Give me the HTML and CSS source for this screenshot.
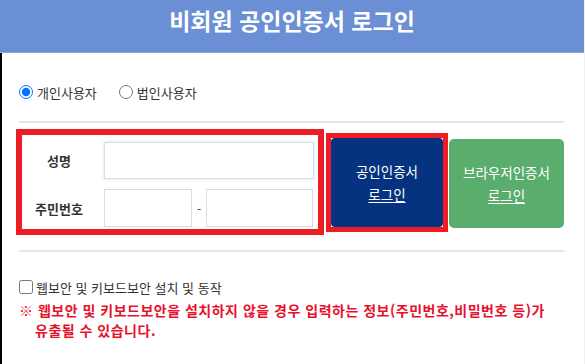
FILE: index.html
```html
<!DOCTYPE html>
<html lang="ko">
<head>
    <meta charset="UTF-8">
    <meta name="viewport" content="width=device-width, initial-scale=1.0">
    <title>비회원 공인인증서 로그인</title>
    <link rel="stylesheet" href="styles.css">
</head>
<body>
    <div class="top">
        <h1>비회원 공인인증서 로그인</h1>
    </div>
    <div class="wrap">
        <div class="types">
            <label class="type"><input type="radio" name="userType" checked> 개인사용자</label>
            <label class="type"><input type="radio" name="userType"> 법인사용자</label>
        </div>
        <hr class="line">
        <div class="login-row">
            <div class="fields">
                <div class="field">
                    <span class="field-name">성명</span>
                    <input type="text" class="inp inp-name">
                </div>
                <div class="field">
                    <span class="field-name">주민번호</span>
                    <input type="text" class="inp inp-jumin1">
                    <span class="dash">-</span>
                    <input type="password" class="inp inp-jumin2">
                </div>
            </div>
            <div class="cert-box">
                <button class="btn btn-cert"><span>공인인증서</span><u>로그인</u></button>
            </div>
            <button class="btn btn-browser"><span>브라우저인증서</span><u>로그인</u></button>
        </div>
        <hr class="line line-bottom">
        <div class="opts">
            <label class="security"><input type="checkbox"> 웹보안 및 키보드보안 설치 및 동작</label>
            <p class="warn">※ 웹보안 및 키보드보안을 설치하지 않을 경우 입력하는 정보(주민번호,비밀번호 등)가 유출될 수 있습니다.</p>
        </div>
    </div>
</body>
</html>
```

FILE: styles.css
```css
html, body{
    margin: 0;
    padding: 0;
    height: 100%;
}
body{
    background: #fff;
    font-family: "Noto Sans CJK KR", "Malgun Gothic", sans-serif;
    font-size: 13px;
    color: #333;
    display: flex;
    flex-direction: column;
    border-right: 1px solid #f0f0f0;
    box-sizing: border-box;
}
.top{
    height: 52px;
    background: #6a8fd4;
    border-bottom: 1px solid #8aa8e0;
}
.top h1{
    margin: 0;
    text-align: center;
    color: #fff;
    font-size: 23px;
    font-weight: bold;
    line-height: 40px;
}
.wrap{
    flex: 1;
    border-left: 2px solid #000;
    padding: 0 20px 0 17px;
}
.types{
    display: flex;
    gap: 22px;
    margin-top: 29px;
    height: 20px;
    align-items: center;
}
.type{
    display: flex;
    align-items: center;
    gap: 4px;
}
.type input{
    margin: 0;
    width: 14px;
    height: 14px;
}
.line{
    margin: 19px 0 0;
    border: 0;
    height: 2px;
    background: #e6e6e6;
}
.login-row{
    display: flex;
    align-items: flex-start;
    margin-top: 12px;
}
.fields{
    margin-left: 3px;
    width: 296px;
    height: 94px;
    box-sizing: border-box;
    padding: 7px 4px 0 0;
    outline: 6px solid #ee1c25;
    display: flex;
    flex-direction: column;
    gap: 10px;
}
.field{
    display: flex;
    align-items: center;
}
.field-name{
    width: 74px;
    margin-right: 8px;
    text-align: center;
    font-size: 13px;
    font-weight: bold;
    color: #333;
}
.inp{
    box-sizing: border-box;
    height: 37px;
    border: 1px solid #dcdcdc;
    background: #fff;
    margin: 0;
    padding: 0 6px;
    font-size: 13px;
}
.inp-name{
    width: 210px;
    border-color: #d3e0ee;
    box-shadow: 0 0 3px rgba(120, 170, 230, 0.35);
}
.inp-jumin1{
    width: 88px;
    height: 38px;
}
.inp-jumin2{
    width: 107px;
    height: 38px;
}
.dash{
    width: 14px;
    text-align: center;
    color: #555;
}
.cert-box{
    margin: -2px 0 0 8px;
    border: 5px solid #ee1c25;
    display: flex;
}
.btn{
    height: 89px;
    border: none;
    border-radius: 5px;
    color: #fff;
    font-family: inherit;
    font-size: 13.5px;
    line-height: 23px;
    display: flex;
    flex-direction: column;
    align-items: center;
    justify-content: center;
    padding: 0;
}
.btn u{
    text-underline-offset: 2px;
}
.btn-cert{
    width: 112px;
    background: #063380;
    border-radius: 4px;
}
.btn-browser{
    margin: 4px 0 0 1px;
    width: 116px;
    background: #59ad6d;
}
.line-bottom{
    margin-top: 18px;
}
.opts{
    margin-top: 25px;
}
.security{
    display: flex;
    align-items: center;
    gap: 3px;
    height: 20px;
}
.security input{
    margin: 0;
    width: 14px;
    height: 14px;
}
.warn{
    margin: 3px 0 0;
    color: #e8112d;
    font-size: 14px;
    font-weight: bold;
    line-height: 20px;
    letter-spacing: 0.5px;
    word-break: keep-all;
    padding-left: 16px;
    text-indent: -16px;
}
```
